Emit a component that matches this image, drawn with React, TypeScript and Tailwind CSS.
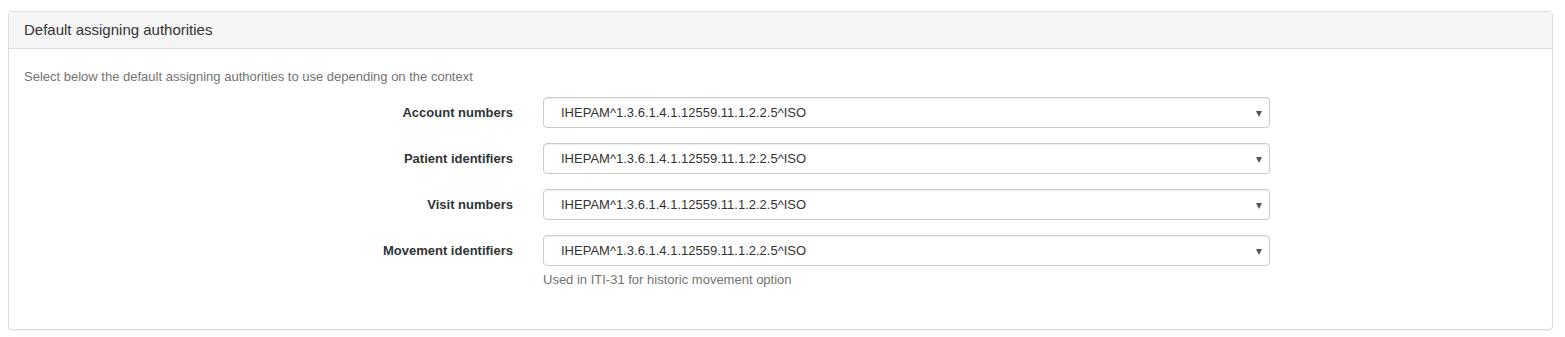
const VALUE = "IHEPAM^1.3.6.1.4.1.12559.11.1.2.2.5^ISO";

const rows = [
  { label: "Account numbers" },
  { label: "Patient identifiers" },
  { label: "Visit numbers" },
  { label: "Movement identifiers", help: "Used in ITI-31 for historic movement option" },
];

function FakeSelect({ value }: { value: string }) {
  return (
    <div className="relative flex items-center h-[31px] w-[727px] rounded-[4px] border border-[#cccccc] bg-white pl-[17px] text-[13px] text-[#333333] shadow-[inset_0_1px_1px_rgba(0,0,0,0.075)]">
      <span>{value}</span>
      {/* caret */}
      <span className="absolute right-[7px] top-[13px] h-0 w-0 border-l-[3px] border-r-[3px] border-t-[6px] border-l-transparent border-r-transparent border-t-[#555555]" />
    </div>
  );
}

export default function App() {
  return (
    <div className="min-h-screen bg-white pt-[11px] pl-[8px] pr-[12px] font-['Liberation_Sans',Arial,sans-serif] text-[#333333]">
      <div className="rounded-[4px] border border-[#dddddd] bg-white shadow-[0_1px_1px_rgba(0,0,0,0.05)]">
        {/* Heading */}
        <div className="flex h-[37px] items-center rounded-t-[3px] border-b border-[#dddddd] bg-[#f5f5f5] px-[15px] pb-[2px]">
          <h3 className="text-[15px] leading-none">Default assigning authorities</h3>
        </div>

        {/* Body */}
        <div className="px-[15px] pt-[19px] pb-[40px]">
          <p className="text-[13px] leading-[18px] text-[#737373]">
            Select below the default assigning authorities to use depending on the context
          </p>

          <div className="mt-[11px] flex flex-col gap-[15px]">
            {rows.map((row) => (
              <div key={row.label} className="flex items-start">
                <label className="flex h-[31px] w-[489px] items-center justify-end text-[13px] font-bold">
                  {row.label}
                </label>
                <div className="ml-[30px]">
                  <FakeSelect value={VALUE} />
                  {row.help && (
                    <p className="mt-[5px] text-[13px] leading-[18px] text-[#737373]">{row.help}</p>
                  )}
                </div>
              </div>
            ))}
          </div>
        </div>
      </div>
    </div>
  );
}
